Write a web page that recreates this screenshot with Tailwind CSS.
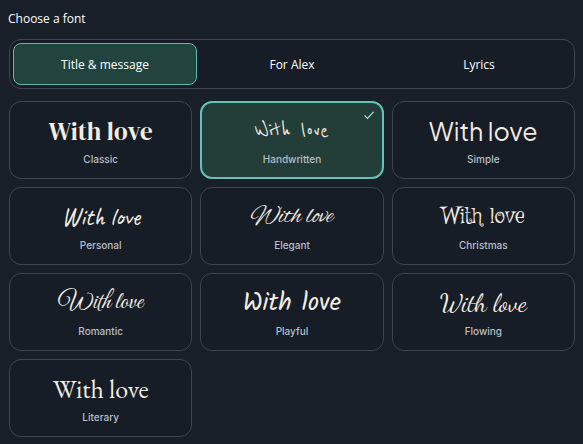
<!DOCTYPE html>
<html lang="en">
<head>
  <meta charset="UTF-8" />
  <meta name="viewport" content="width=device-width, initial-scale=1.0">
  <title>Choose a font</title>
  <script src="https://cdn.jsdelivr.net/npm/@tailwindcss/browser@4"></script>
</head>
<body class="bg-[#181f28] min-h-screen p-2 font-['Open_Sans','Noto_Sans',sans-serif] text-white">

  <h2 id="fontHeading" class="text-xs leading-[22px] mb-[9px]">Choose a font</h2>

  <!-- Which text the font applies to -->
  <div class="grid grid-cols-3 gap-[3px] p-[3px] ml-px mb-3 rounded-xl border border-[#3f4650] bg-[#161d26] text-xs">
    <button type="button" aria-pressed="true" class="h-[42px] pt-[2px] rounded-lg border border-[#5fb8a8] bg-[#22443f]">Title &amp; message</button>
    <button type="button" aria-pressed="false" class="h-[42px] pt-[2px] rounded-lg">For Alex</button>
    <button type="button" aria-pressed="false" class="h-[42px] pt-[2px] rounded-lg">Lyrics</button>
  </div>

  <!-- Font cards -->
  <div role="group" aria-labelledby="fontHeading" class="grid grid-cols-3 gap-2 ml-px text-[#f2ece1]">
    <button type="button" class="flex flex-col items-center h-[78px] pt-3 rounded-xl border border-[#3f4650] bg-[#161d26]">
      <span class="h-9 leading-[34px] whitespace-nowrap text-[25px] font-['DM_Serif_Display','Liberation_Serif',serif]">With love</span>
      <span class="mt-px text-[10px] leading-4 font-medium text-[#b9bfc6] font-[Inter,sans-serif]">Classic</span>
    </button>
    <button type="button" aria-pressed="true" class="relative flex flex-col items-center h-[78px] pt-[11px] rounded-xl border-2 border-[#65c3b2] bg-[#233d39]">
      <span class="h-9 leading-[34px] whitespace-nowrap text-[25px] font-['Reenie_Beanie',cursive]">With love</span>
      <span class="mt-px text-[10px] leading-4 font-medium text-[#b9bfc6] font-[Inter,sans-serif]">Handwritten</span>
      <svg class="absolute top-[6px] right-[7px] w-3 h-3 text-[#a5eadc]" viewBox="0 0 12 12" fill="none" stroke="currentColor" stroke-width="1.2" aria-hidden="true">
        <path d="M1.5 6.3 4.5 9.3 10.5 2.8" />
      </svg>
    </button>
    <button type="button" class="flex flex-col items-center h-[78px] pt-3 rounded-xl border border-[#3f4650] bg-[#161d26]">
      <span class="h-9 leading-[34px] whitespace-nowrap text-[25px] font-['Plus_Jakarta_Sans',Inter,sans-serif]">With love</span>
      <span class="mt-px text-[10px] leading-4 font-medium text-[#b9bfc6] font-[Inter,sans-serif]">Simple</span>
    </button>
    <button type="button" class="flex flex-col items-center h-[78px] pt-3 rounded-xl border border-[#3f4650] bg-[#161d26]">
      <span class="h-9 leading-[34px] whitespace-nowrap text-[25px] font-[Caveat,cursive]">With love</span>
      <span class="mt-px text-[10px] leading-4 font-medium text-[#b9bfc6] font-[Inter,sans-serif]">Personal</span>
    </button>
    <button type="button" class="flex flex-col items-center h-[78px] pt-3 rounded-xl border border-[#3f4650] bg-[#161d26]">
      <span class="h-9 leading-[34px] whitespace-nowrap text-[25px] font-['Alex_Brush',cursive]">With love</span>
      <span class="mt-px text-[10px] leading-4 font-medium text-[#b9bfc6] font-[Inter,sans-serif]">Elegant</span>
    </button>
    <button type="button" class="flex flex-col items-center h-[78px] pt-3 rounded-xl border border-[#3f4650] bg-[#161d26]">
      <span class="h-9 leading-[34px] whitespace-nowrap text-[22px] font-['Mountains_of_Christmas',Griffy,'Liberation_Serif',cursive]">With love</span>
      <span class="mt-px text-[10px] leading-4 font-medium text-[#b9bfc6] font-[Inter,sans-serif]">Christmas</span>
    </button>
    <button type="button" class="flex flex-col items-center h-[78px] pt-3 rounded-xl border border-[#3f4650] bg-[#161d26]">
      <span class="h-9 leading-[34px] whitespace-nowrap text-[25px] font-['Great_Vibes',cursive]">With love</span>
      <span class="mt-px text-[10px] leading-4 font-medium text-[#b9bfc6] font-[Inter,sans-serif]">Romantic</span>
    </button>
    <button type="button" class="flex flex-col items-center h-[78px] pt-3 rounded-xl border border-[#3f4650] bg-[#161d26]">
      <span class="h-9 leading-[34px] whitespace-nowrap text-[25px] font-[Kalam,cursive]">With love</span>
      <span class="mt-px text-[10px] leading-4 font-medium text-[#b9bfc6] font-[Inter,sans-serif]">Playful</span>
    </button>
    <button type="button" class="flex flex-col items-center h-[78px] pt-3 rounded-xl border border-[#3f4650] bg-[#161d26]">
      <span class="h-9 leading-[34px] whitespace-nowrap text-[25px] font-['Dancing_Script',cursive]">With love</span>
      <span class="mt-px text-[10px] leading-4 font-medium text-[#b9bfc6] font-[Inter,sans-serif]">Flowing</span>
    </button>
    <button type="button" class="flex flex-col items-center h-[78px] pt-3 rounded-xl border border-[#3f4650] bg-[#161d26]">
      <span class="h-9 leading-[34px] whitespace-nowrap text-[26px] font-['EB_Garamond','Liberation_Serif',serif]">With love</span>
      <span class="mt-px text-[10px] leading-4 font-medium text-[#b9bfc6] font-[Inter,sans-serif]">Literary</span>
    </button>
  </div>

</body>
</html>
